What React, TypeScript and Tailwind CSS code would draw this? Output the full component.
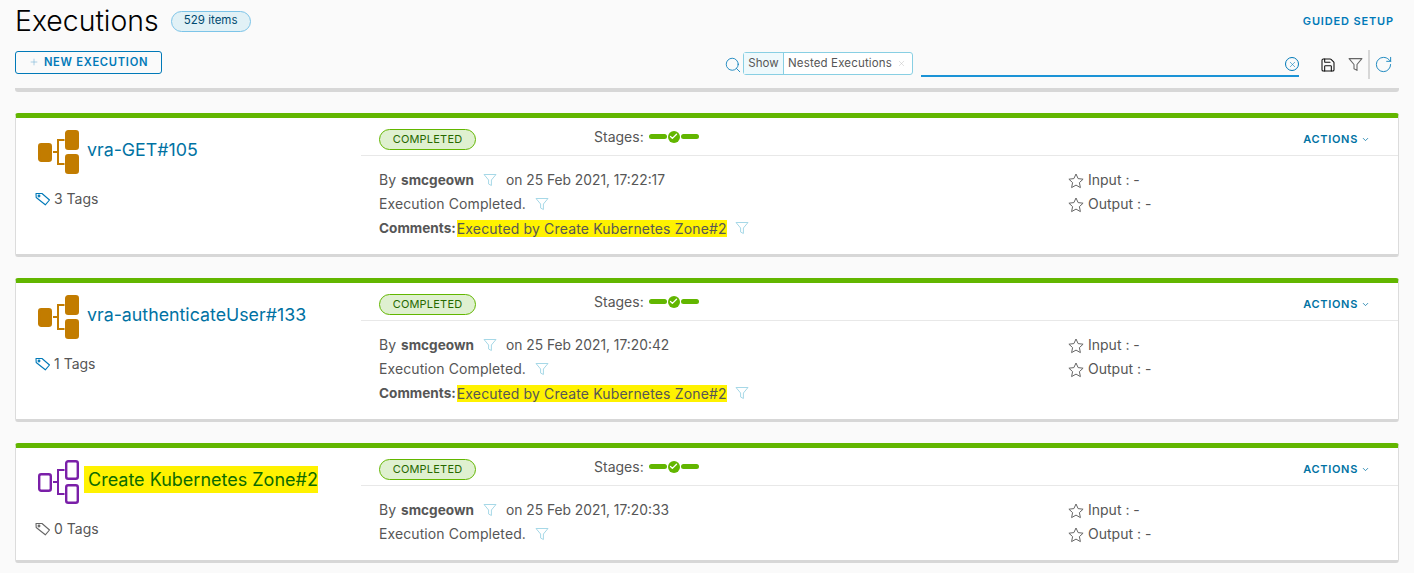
import { Check, ChevronDown, Plus, RotateCw, Save, Search, X } from "lucide-react";

type Execution = {
  name: string;
  tags: string;
  date: string;
  comments?: boolean;
  highlighted?: boolean;
};

const executions: Execution[] = [
  { name: "vra-GET#105", tags: "3 Tags", date: "25 Feb 2021, 17:22:17", comments: true },
  { name: "vra-authenticateUser#133", tags: "1 Tags", date: "25 Feb 2021, 17:20:42", comments: true },
  { name: "Create Kubernetes Zone#2", tags: "0 Tags", date: "25 Feb 2021, 17:20:33", highlighted: true },
];

function Funnel({ className }: { className: string }) {
  return (
    <svg viewBox="0 0 14 14" className={className} fill="none" stroke="currentColor" strokeWidth="1">
      <path d="M1 1.5h12L8.4 7v5.5L5.6 11V7z" strokeLinejoin="round" />
    </svg>
  );
}

function Star() {
  return (
    <svg viewBox="0 0 16 16" className="mt-[2px] h-4 w-4 shrink-0 text-[#666]" fill="none" stroke="currentColor" strokeWidth="1">
      <path d="M8 1l2.1 4.6 5 .6-3.7 3.4 1 5L8 12.1l-4.4 2.5 1-5L.9 6.2l5-.6z" strokeLinejoin="round" />
    </svg>
  );
}

function Tag({ className }: { className: string }) {
  return (
    <svg viewBox="0 0 16 14" className={className} fill="none" stroke="currentColor" strokeWidth="1.1">
      <path d="M1 1.5h6l7.5 6.5-4.2 4.8L1.2 5.5z" strokeLinejoin="round" />
      <circle cx="4" cy="4" r="0.9" />
    </svg>
  );
}

function FlowIcon({ outline }: { outline?: boolean }) {
  const color = outline ? "#7a1fa8" : "#c27c00";
  const fill = outline ? "#ffffff" : color;
  return (
    <svg viewBox="0 0 42 44" className="h-[44px] w-[42px] shrink-0">
      <rect x="1.2" y="14.2" width="11.6" height="16.6" rx="2" fill={fill} stroke={color} strokeWidth="2.4" />
      <rect x="28.2" y="1.2" width="11.6" height="17.6" rx="2" fill={fill} stroke={color} strokeWidth="2.4" />
      <rect x="28.2" y="25.2" width="11.6" height="17.6" rx="2" fill={fill} stroke={color} strokeWidth="2.4" />
      <path d="M15 22h6M26.5 10H20v24h6.5" fill="none" stroke={color} strokeWidth="2" />
    </svg>
  );
}

function Stages() {
  return (
    <div className="flex items-center gap-[1px]">
      <span className="h-[5px] w-[18px] rounded-full bg-[#62b600]" />
      <span className="flex h-[12px] w-[12px] items-center justify-center rounded-full bg-[#62b600]">
        <Check className="h-[9px] w-[9px] text-white" strokeWidth={3.5} />
      </span>
      <span className="h-[5px] w-[18px] rounded-full bg-[#62b600]" />
    </div>
  );
}

function ExecutionCard({ item }: { item: Execution }) {
  return (
    <div className="flex rounded-[3px] border-x border-x-[#dcdcdc] border-t-[5px] border-b-[3px] border-t-[#62b600] border-b-[#d7d7d7] bg-white">
      <div className="w-[345px] shrink-0 pl-[22px] pt-[12px]">
        <div className="flex h-[44px] items-center">
          <FlowIcon outline={item.highlighted} />
          <span
            className={
              item.highlighted
                ? "mb-[6px] ml-[4px] bg-[#fff200] pl-[4px] text-[18px] leading-[27px] text-[#0c6b00]"
                : "mb-[6px] ml-[7px] text-[17.8px] leading-[27px] text-[#0072a3]"
            }
          >
            {item.name}
          </span>
        </div>
        <div className="-ml-[3px] mt-[13px] flex items-center gap-[3px] text-[14px] leading-[24px] text-[#565656]">
          <Tag className={item.highlighted ? "h-[14px] w-[16px] text-[#666]" : "h-[14px] w-[16px] text-[#0079b8]"} />
          {item.tags}
        </div>
      </div>

      <div className="min-w-0 flex-1 pb-[14px]">
        <div className="flex h-[38px] items-center border-b border-[#e8e8e8] pl-[18px] pr-[28px]">
          <span className="mt-[6px] flex h-[21px] w-[97px] items-center justify-center rounded-full border border-[#62b600] bg-[#dff0d0] text-[11px] tracking-[0.2px] text-[#266900]">
            COMPLETED
          </span>
          <span className="ml-[118px] mr-[5px] text-[14px] text-[#565656]">Stages:</span>
          <Stages />
          <span className="ml-auto mt-[6px] flex items-center gap-[3px] text-[11px] font-semibold tracking-[0.7px] text-[#0072a3]">
            ACTIONS
            <ChevronDown className="h-[9px] w-[9px]" strokeWidth={2} />
          </span>
        </div>

        <div className="flex pl-[18px] pt-[12px] text-[14px] leading-[24px] text-[#565656]">
          <div className="w-[689px] shrink-0">
            <div className="flex items-center">
              By <b className="ml-[5px] text-[13.6px] font-bold">smcgeown</b>
              <Funnel className="ml-[9px] h-[14px] w-[14px] text-[#a6d8e7]" />
              <span className="ml-[9px] text-[13.8px]">on {item.date}</span>
            </div>
            <div className="flex items-center">
              <span className="tracking-[0.1px]">Execution Completed.</span>
              <Funnel className="ml-[9px] h-[14px] w-[14px] text-[#a6d8e7]" />
            </div>
            {item.comments && (
              <div className="flex items-center">
                <b className="text-[13.6px] font-bold">Comments:</b>
                <span className="ml-[1px] bg-[#fff200] leading-[17px] tracking-[0.16px]">Executed by Create Kubernetes Zone#2</span>
                <Funnel className="ml-[8px] h-[14px] w-[14px] text-[#a6d8e7]" />
              </div>
            )}
          </div>
          <div>
            <div className="flex items-center gap-[4px]">
              <Star />
              Input : -
            </div>
            <div className="flex items-center gap-[4px]">
              <Star />
              Output : -
            </div>
          </div>
        </div>
      </div>
    </div>
  );
}

export default function App() {
  return (
    <div className="h-[573px] overflow-hidden bg-[#fafafa] px-[15px] font-['Inter',sans-serif]">
      <div className="flex h-[42px] items-center">
        <h1 className="text-[28.4px] font-light leading-[42px] text-black">Executions</h1>
        <span className="ml-[12px] flex h-[21px] w-[80px] items-center justify-center rounded-full border border-[#7cc4e8] bg-[#e1f1f6] text-[11.5px] text-[#004a70]">
          529 items
        </span>
        <span className="ml-auto mr-[5px] text-[11px] font-semibold tracking-[0.85px] text-[#0079b8]">GUIDED SETUP</span>
      </div>

      <div className="mt-[8px] flex h-[24px] items-center">
        <button className="flex h-[23px] w-[147px] items-center justify-center gap-[5px] rounded-[3px] border border-[#0079b8] text-[11.2px] font-semibold tracking-[0.7px] text-[#0079b8]">
          <Plus className="h-[10px] w-[10px] text-[#7fb8d8]" strokeWidth={1.5} />
          NEW EXECUTION
        </button>
        <Search className="ml-[562px] mt-[6px] h-[18px] w-[18px] text-[#0079b8]" strokeWidth={1.1} />
        <div className="ml-[1px] mt-[3px] flex h-[23px] w-[170px] items-center rounded-[3px] border border-[#88cfe3] bg-white text-[11.5px] text-[#565656]">
          <span className="flex h-full w-[39px] items-center justify-center bg-[#eef9fc]">Show</span>
          <span className="flex h-full items-center border-l border-[#88cfe3] pl-[4px] tracking-[0.15px]">Nested Executions</span>
          <X className="ml-[5px] h-[9px] w-[9px] text-[#bbb]" strokeWidth={1.2} />
        </div>
        <div className="relative ml-[8px] mt-[6px] h-[24px] w-[378px] border-b-2 border-[#1b93d6]">
          <span className="absolute right-0 top-[4px] flex h-[14px] w-[14px] items-center justify-center rounded-full border border-[#0079b8]">
            <X className="h-[9px] w-[9px] text-[#0079b8]" strokeWidth={1.5} />
          </span>
        </div>
        <Save className="ml-[21px] mt-[6px] h-[16px] w-[16px] text-[#111]" strokeWidth={1.6} />
        <Funnel className="ml-[12px] mt-[4px] h-[15px] w-[15px] text-[#666]" />
        <span className="ml-[5px] mt-[5px] h-[29px] w-[2px] bg-[#d7d7d7]" />
        <RotateCw className="ml-[4px] mt-[5px] h-[19px] w-[19px] text-[#0079b8]" strokeWidth={1.1} />
      </div>

      <div className="mt-[14px] h-[4px] rounded-b-[3px] bg-[#d7d7d7]" />

      <div className="mt-[21px] flex flex-col gap-[21px]">
        {executions.map((item) => (
          <ExecutionCard key={item.name} item={item} />
        ))}
      </div>
    </div>
  );
}
